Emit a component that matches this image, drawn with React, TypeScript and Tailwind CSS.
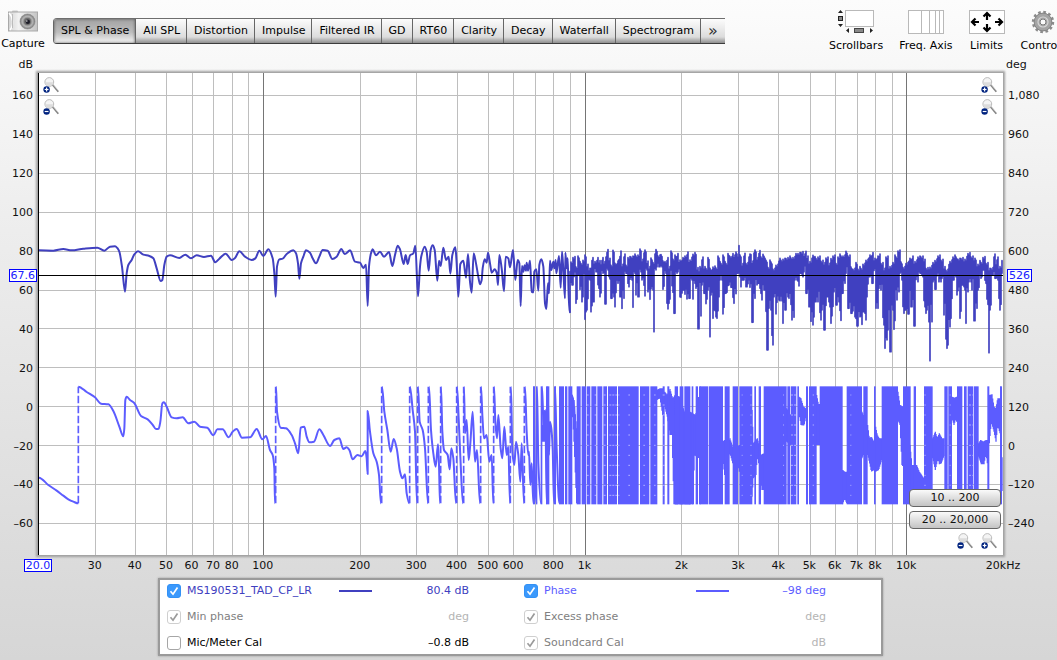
import { useState } from "react";
import type { ReactNode } from "react";
import clsx from "clsx";

// Chart units: three per pixel at the default window width.
const CHART_W = 2892;
const CHART_H = 1446;
const DECADE = 965;

const freqToX = (f: number) => 673.5 + DECADE * (Math.log10(f) - 2);

type Pt = [number, number];

function parse(s: string, dx: number, dy: number): Pt[] {
  return s.trim().split(/\s+/).map((p) => {
    const [x, y] = p.split(",").map(Number);
    return [x + dx, y + dy] as Pt;
  });
}

// Smooth curve that keeps every peak and dip where it was measured
function curve(pts: Pt[]) {
  const slope = (a: Pt, b: Pt) => (b[0] === a[0] ? 0 : (b[1] - a[1]) / (b[0] - a[0]));
  const tangents = pts.map((p, i) => {
    if (i === 0 || i === pts.length - 1) return 0;
    const l = slope(pts[i - 1], p);
    const r = slope(p, pts[i + 1]);
    return l * r <= 0 ? 0 : (2 * l * r) / (l + r);
  });
  let d = `M${pts[0][0]} ${pts[0][1]}`;
  for (let i = 1; i < pts.length; i++) {
    const [x0, y0] = pts[i - 1];
    const [x1, y1] = pts[i];
    const h = (x1 - x0) / 3;
    d += `C${x0 + h} ${y0 + h * tangents[i - 1]} ${x1 - h} ${y1 - h * tangents[i]} ${x1} ${y1}`;
  }
  return d;
}

function at(pts: Pt[], x: number) {
  let i = 1;
  while (i < pts.length - 1 && pts[i][0] < x) i++;
  const [x0, y0] = pts[i - 1];
  const [x1, y1] = pts[i];
  const t = Math.min(1, Math.max(0, (x - x0) / (x1 - x0 || 1)));
  return y0 + (y1 - y0) * t;
}

function nearest(pts: Pt[], x: number) {
  let best = pts[0];
  for (const p of pts) if (Math.abs(p[0] - x) < Math.abs(best[0] - x)) best = p;
  return best[1];
}

// Vertical hatching between two outlines
function hatch(top: Pt[], bottom: Pt[], step: number) {
  const end = top[top.length - 1][0];
  let d = "";
  for (let x = top[0][0]; x <= end; x += step) {
    d += `M${x} ${at(top, x)}V${at(bottom, x)}`;
  }
  return d;
}

// Same, but with ragged ends, as closely packed peaks and dips have
function bars(top: Pt[], bottom: Pt[], step: number) {
  const end = top[top.length - 1][0];
  let d = "";
  let n = 0;
  for (let x = top[0][0]; x <= end; x += step) {
    const t = nearest(top, x) + ((n * 7) % 5) * 3;
    let b = nearest(bottom, x);
    if (n % 3 === 1) b -= (b - t) * 0.12;
    if (n % 7 === 4) b -= (b - t) * 0.25;
    d += `M${x} ${t}V${b}`;
    n++;
  }
  return d;
}

const LOW = -117;
const MID = 933;
const HIGH = 1983;
const SPL_Y = 471;
const PH_Y = 906;

const SPL_LINE: Pt[] = [
  ...parse(
    `117,61 160,62 190,57 215,61 250,56 292,53 313,62 330,50 345,49 352,54 358,65 366,110 375,185 380,130 385,105 395,90 403,73 414,64
     430,74 448,78 460,85 470,115 482,153 487,150 493,105 500,80 510,76 538,84 556,74 573,85 590,76 612,81 633,77 646,97 658,86 677,71
     695,90 705,84 718,64 735,80 755,90 766,85 778,62 790,78 805,58 818,85 823,130 827,200 831,110 838,88 848,86 860,72 880,61 888,70
     894,100 898,146 903,100 910,80 918,61 930,68 938,85 948,100 958,80 968,60 983,62 997,87 1010,80 1024,57 1034,72 1048,62`,
    LOW, SPL_Y),
  ...parse(
    `0,61 15,95 30,98 40,114 48,104 53,228 57,110 63,70 68,58 78,76 90,65 102,80 117,66 127,108 135,75 143,47 150,58 161,102 167,75
     173,102 180,76 190,70 196,47 204,199 210,110 214,78 224,50 230,65 236,122 242,60 248,46 254,60 262,152 267,92 272,108 280,53
     288,90 296,80 301,131 307,75 316,52 320,100 325,200 331,102 340,92 348,143 354,72 360,155 365,188 371,70 378,100 384,135 390,163
     395,150 398,115 404,88 410,98 414,68 420,100 425,128 434,118 440,128 444,165 448,75 455,115 462,184 467,80 475,85 480,112
     489,60 496,150 503,90 508,100 512,228 516,108 520,125 524,106 528,122 530,98 534,122 540,92 545,185 550,187 553,125 559,118
     565,182 568,105 574,88 580,110 585,220 589,237 594,160 597,190 600,92 604,120 610,95 613,115 617,90 619,130 627,78 632,173
     636,65 640,120 645,205 646,68 650,115 653,85 656,195 659,247`,
    MID, SPL_Y),
];

const SPL_TOP: Pt[] = [
  ...parse(
    `660,125 665,90 672,80 678,105 685,75 692,95 700,88 706,75 710,100 718,115 722,110 728,80 735,95 741,80 748,92 752,100 756,80
     764,95 769,75 772,56 777,85 784,100 790,58 796,100 803,90 810,80 812,57 818,100 824,72 830,100 836,80 846,75 855,72 866,72
     872,57 877,85 885,60 892,90 897,110 904,78 910,95 915,72 920,53 926,75 936,68 940,90 948,95 953,80 960,110 965,57 970,85
     977,75 983,68 990,90 997,80 1003,78 1013,63 1020,90 1030,70 1038,68 1043,110 1049,118`,
    MID, SPL_Y),
  ...parse(
    `0,110 6,78 12,110 20,110 27,80 30,115 40,108 50,108 57,75 62,95 70,72 78,95 84,68 92,80 98,68 104,75 108,60 114,80 117,38
     122,75 128,98 134,70 140,95 148,72 153,68 158,90 165,60 172,80 178,62 184,75 190,70 198,85 204,110 215,90 222,115 232,100
     238,85 250,85 262,80 272,78 282,80 288,65 298,68 306,62 312,72 318,58 322,75 330,95 338,73 348,80 356,78 365,88 375,98 380,78
     388,100 395,80 402,75 408,95 414,78 425,72 432,75 438,58 448,75 455,105 462,115 468,92 475,115 483,110 492,100 500,85 508,75
     518,65 524,85 532,75 540,72 545,95 553,115 562,75 570,110 580,95 588,75 598,60 604,90 612,110 622,95 630,85 638,75 645,95
     655,78 665,75 675,88 680,110 690,112 698,95 706,92 715,75 725,85 733,110 740,115 752,95 758,78 768,75 778,85 785,80 795,88
     805,68 815,75 825,85 832,100 842,92 850,80 860,95 868,115 876,110 882,72 888,100 893,78 900,110 907,80`,
    HIGH, SPL_Y),
];

const SPL_BOTTOM: Pt[] = [
  ...parse(
    `660,247 663,165 670,165 675,125 679,220 685,135 692,190 698,215 702,130 706,268 712,240 716,150 724,245 731,215 737,125 745,175
     752,200 757,130 768,222 773,120 778,155 786,205 792,200 796,230 801,150 806,160 812,200 816,252 821,205 828,130 838,170 843,150
     849,232 854,130 860,195 866,200 871,125 876,150 883,198 889,120 896,185 903,208 908,180 911,305 915,120 925,110 935,110 941,178
     947,130 951,237 957,220 963,120 968,200 974,250 978,130 985,125 989,200 995,202 1001,180 1006,208 1013,207 1020,205 1025,150
     1028,252 1033,160 1040,175 1047,296 1049,170`,
    MID, SPL_Y),
  ...parse(
    `0,180 3,258 8,165 13,190 20,235 25,180 29,320 34,195 38,265 42,280 47,260 53,265 56,200 62,150 71,252 76,190 82,198 88,165
     94,172 100,220 108,208 112,130 118,140 124,170 132,150 140,170 150,172 156,277 162,205 168,175 175,160 180,190 187,210 193,180
     197,265 203,360 207,250 213,240 218,345 222,200 228,252 235,210 242,212 250,280 256,240 262,200 268,205 275,270 281,262 287,150
     295,180 300,130 306,140 314,125 320,190 328,230 335,297 341,285 348,215 355,215 361,270 367,240 376,300 381,200 388,230 396,280
     403,185 410,225 416,215 420,298 427,190 433,160 440,130 447,235 454,250 463,260 471,288 478,260 485,305 490,245 495,270 502,200
     510,140 516,160 522,125 530,235 538,175 545,180 550,285 556,355 561,330 565,300 570,365 576,240 582,298 588,210 594,185 600,130
     606,150 610,268 617,240 624,252 632,230 640,225 643,288 650,155 660,130 668,140 675,250 682,240 686,275 690,392 694,275 700,155
     706,178 712,145 720,155 728,145 735,255 739,355 743,345 748,290 755,265 758,150 766,140 773,195 782,265 786,165 794,180 798,342
     802,185 810,155 818,180 823,272 829,235 836,180 842,145 850,120 858,160 862,240 866,368 870,240 876,135 884,145 892,150 896,205
     903,258 908,130`,
    HIGH, SPL_Y),
];

// One entry per stretch between phase wraps
const PHASE_LINES: Pt[][] = [
  parse("117,308 145,330 170,347 190,362 205,373 220,380 235,385", LOW, PH_Y),
  parse(
    `235,35 260,51 285,67 303,86 325,88 340,108 358,155 370,184 373,160 376,75 380,65 390,75 402,83 423,123 443,133 457,148 468,162
     476,161 481,140 487,85 492,82 500,95 515,127 530,130 548,127 565,145 583,140 600,155 622,158 640,181 652,163 668,163 686,187
     698,170 710,162 726,188 750,187 770,162 787,193 798,183 810,225 818,240 823,280 825,385`,
    LOW, PH_Y),
  [
    ...parse(
      `828,35 831,110 842,158 858,160 875,180 885,205 895,235 902,158 913,155 920,185 928,202 942,200 958,163 970,180 990,213 1003,195
       1018,190 1030,222 1040,217 1048,225`,
      LOW, PH_Y),
    ...parse("0,230 8,253 22,240 35,244 46,228 50,250 53,297 53,108 60,170 70,235 80,260 87,300 93,385", MID, PH_Y),
  ],
  ...[
    "96,35 103,110 112,165 122,230 131,192 140,220 150,290 157,310 165,298 170,355 178,385",
    "180,35 188,105 195,170 201,385",
    "204,35 209,140 218,165 225,220 234,385",
    "237,35 243,165 250,235 257,275 264,208 267,270 270,385",
    "273,35 277,170 282,225 293,240 299,283 304,220 310,250 318,385",
    "321,35 326,130 331,245 339,385",
    "342,35 345,175 350,135 356,255 361,205 368,110 375,260 381,225 390,385",
    "393,35 397,120 402,190 410,180 418,260 425,240 430,385",
    "432,35 436,140 441,190 445,120 452,220 457,250 463,155 470,240 475,215 480,385",
    "483,35 487,230 493,270 498,200 505,240 511,320 515,205 522,385",
    "525,35 530,170 535,240 537,230 541,330 545,265 550,385",
    "552,35 554,270 559,385",
    "561,35 565,265 573,385",
    "576,35 580,140 584,195 586,105 590,385",
    "593,35 597,240 600,140 604,160 608,220 612,385",
    "615,35 620,220 628,385",
    "665,60 670,80 675,150 679,230 682,385",
  ].map((s) => parse(s, MID, PH_Y)),
];

// Where the phase passes -180 and starts again at +180
const WRAPS = [118, 710, 1028, 1112, 1136, 1168, 1205, 1253, 1274, 1325, 1364, 1414, 1456];

// Runs so dense that they read as solid bars
const PHASE_SOLID: Pt[] = [
  ...(
    [
      [549, 555], [558, 562], [572, 577], [588, 598], [612, 618], [627, 642], [645, 652], [655, 667], [680, 692], [695, 708],
      [710, 721], [724, 739], [742, 757], [760, 771], [774, 801], [804, 866], [870, 898], [901, 922], [938, 944], [952, 958],
      [974, 984], [989, 1000], [1003, 1021], [1025, 1030], [1037, 1044], [1047, 1052],
    ] as Pt[]
  ).map(([a, b]) => [a + MID, b + MID] as Pt),
  ...(
    [
      [0, 24], [26, 69], [74, 89], [98, 114], [118, 157], [163, 168], [176, 183], [191, 260], [262, 270], [272, 289], [292, 297],
      [318, 324], [327, 350], [359, 428], [440, 486], [490, 503], [522, 527], [545, 594], [609, 632], [641, 648], [672, 698],
      [733, 743], [745, 756], [771, 787], [792, 800], [803, 820], [822, 836], [862, 868], [900, 906],
    ] as Pt[]
  ).map(([a, b]) => [a + HIGH, b + HIGH] as Pt),
];

// Areas that fill only part of the phase range: top outline, bottom outline
const PHASE_PARTIAL: [Pt[], Pt[]][] = (
  [
    ["578,150 582,105 588,110", "578,200 588,200", MID],
    ["666,60 672,75 680,160", "666,90 672,200 680,385", MID],
    ["920,45 930,40 938,40", "920,75 930,70 938,120", MID],
    ["944,50 952,60 960,42 968,70 976,60", "944,95 952,125 960,180 968,180 976,180", MID],
    ["966,180 976,170 1000,120 1030,120", "966,180 972,388 1030,388 1030,388", MID],
    ["976,60 990,65 1003,110 1020,120", "976,388 1020,388", MID],
    ["1020,110 1037,120 1047,60", "1020,388 1030,380 1033,240 1047,250", MID],
    ["68,200 74,195 80,210 90,190 98,215", "68,250 74,300 80,250 90,235 98,265", HIGH],
    ["112,215 118,210", "112,260 118,290", HIGH],
    ["156,105 160,205 168,195 172,190 176,205", "156,365 160,310 168,300 172,240 176,265", HIGH],
    ["182,240 191,235", "182,320 186,345 191,345", HIGH],
    ["260,100 272,120", "260,200 272,210", HIGH],
    ["297,65 303,70 310,95 318,100", "297,115 303,150 312,152 318,125", HIGH],
    ["350,60 356,90 359,85", "350,210 359,210", HIGH],
    ["428,285 434,290 440,290", "428,388 434,370 440,385", HIGH],
    ["486,110 490,120", "486,250 490,240", HIGH],
    ["503,150 508,190 514,185 522,200", "503,240 510,270 514,290 522,285", HIGH],
    ["527,155 532,180 538,190 545,190", "527,290 536,285 545,255", HIGH],
    ["594,50 600,90 609,95", "594,135 600,150 606,270 609,275", HIGH],
    ["630,210 636,270 650,270 658,290 672,310", "630,388 672,388", HIGH],
    ["698,190 706,170 712,190 718,175 726,190 733,190", "698,250 706,285 714,250 718,268 724,265 733,240", HIGH],
    ["756,65 764,68 771,65", "756,130 762,150 768,130 771,145", HIGH],
    ["836,205 842,195 850,200 858,195 862,195", "836,245 844,268 852,268 858,235 862,265", HIGH],
    ["868,60 876,58 882,95 888,100 893,70 900,70", "868,205 874,140 882,170 888,200 893,150 900,175", HIGH],
    ["902,35 907,300", "902,200 907,385", HIGH],
  ] as [string, string, number][]
).map(([t, b, dx]) => [parse(t, dx, PH_Y), parse(b, dx, PH_Y)]);

// Places where the dashes of neighbouring wraps leave light gaps
const FLECKS: [number, number][] = [
  [1643, 1651], [1667, 1672], [1694, 1700], [1711, 1741], [1768, 1773], [1813, 1818], [1845, 1850], [1871, 1877],
  [2108, 2111], [2134, 2138], [2232, 2235], [2256, 2271], [2321, 2325], [2434, 2437], [2656, 2660], [2732, 2735], [2790, 2801],
];
const FLECK_ROWS = [60, 90, 120, 150, 180, 211, 241, 271, 301, 331, 361];

const DB = ["160", "140", "120", "100", "80", "60", "40", "20", "0", "–20", "–40", "–60"];
const DEG = ["1,080", "960", "840", "720", "600", "480", "360", "240", "120", "0", "–120", "–240"];

const FREQS: [number, string][] = [
  [20, "20.0"], [30, "30"], [40, "40"], [50, "50"], [60, "60"], [70, "70"], [80, "80"], [100, "100"], [200, "200"], [300, "300"],
  [400, "400"], [500, "500"], [600, "600"], [800, "800"], [1000, "1k"], [2000, "2k"], [3000, "3k"], [4000, "4k"], [5000, "5k"],
  [6000, "6k"], [7000, "7k"], [8000, "8k"], [10000, "10k"], [20000, "20kHz"],
];

const GRID_FREQS = [10, 100, 1000, 10000].flatMap((d) => [1, 2, 3, 4, 5, 6, 7, 8, 9].map((n) => n * d))
  .filter((f) => f > 20 && f < 20000);

const TABS = ["SPL & Phase", "All SPL", "Distortion", "Impulse", "Filtered IR", "GD", "RT60", "Clarity", "Decay", "Waterfall", "Spectrogram"];

function Chart() {
  const spl = { fill: "none", stroke: "#4040c0", strokeLinejoin: "round", strokeLinecap: "round" } as const;
  return (
    <svg
      viewBox={`0 0 ${CHART_W} ${CHART_H}`}
      preserveAspectRatio="none"
      className="block h-full w-full"
      role="img"
      aria-label="SPL and phase against frequency"
    >
      <g shapeRendering="crispEdges" strokeWidth="3">
        {DB.map((v, i) => {
          const y = 67.5 + Math.round(i * 38.9) * 3;
          return <line key={v} x1="0" x2={CHART_W} y1={y} y2={y} stroke="#bebebe" />;
        })}
        {GRID_FREQS.map((f) => {
          const x = freqToX(f);
          const decade = Number.isInteger(Math.log10(f));
          return <line key={f} x1={x} x2={x} y1="0" y2={CHART_H} stroke={decade ? "#757575" : "#bebebe"} />;
        })}
      </g>

      <path d={curve(SPL_LINE)} {...spl} strokeWidth="6" />
      <path d={bars(SPL_TOP, SPL_BOTTOM, 3)} {...spl} strokeWidth="5" />

      <g stroke="#5c5cff" fill="none" strokeLinejoin="round">
        {WRAPS.map((x) => (
          <line key={x} x1={x} x2={x} y1={PH_Y + 385} y2={PH_Y + 35} strokeWidth="5" strokeDasharray="23 7" />
        ))}
        {PHASE_LINES.map((pts, i) => (
          <path key={i} d={curve(pts)} strokeWidth="6" />
        ))}
        {PHASE_PARTIAL.map(([top, bottom], i) => (
          <path key={i} d={hatch(top, bottom, 2)} strokeWidth="4" />
        ))}
      </g>
      <g fill="#5c5cff">
        {PHASE_SOLID.map(([a, b]) => (
          <rect key={a} x={a} y={PH_Y + 34} width={b - a} height="354" />
        ))}
      </g>
      <g stroke="#d6d6ff" strokeWidth="2">
        {FLECKS.map(([a, b]) =>
          FLECK_ROWS.map((y) => (
            <line key={`${a}-${y}`} x1={a} x2={b} y1={PH_Y + y} y2={PH_Y + y} strokeDasharray="6 3" />
          )),
        )}
      </g>

      <line x1="0" x2={CHART_W} y1="607.5" y2="607.5" stroke="#000" strokeWidth="3" shapeRendering="crispEdges" />
    </svg>
  );
}

function ZoomButton({ sign }: { sign: "in" | "out" }) {
  return (
    <button type="button" aria-label={sign === "in" ? "Zoom in" : "Zoom out"} className="block size-4">
      <svg viewBox="0 0 16 16" className="block size-4">
        <rect width="16" height="16" fill="#fff" />
        <path d="M9.500 7.800 15.300 14.800" stroke="#858585" strokeWidth="1.7" />
        <path d="M10.500 7.800 15.600 13.800" stroke="#d4d4d4" strokeWidth=".7" />
        <circle cx="6.300" cy="5" r="4.400" fill="#f4f4f4" stroke="#b4b4b4" strokeWidth=".9" />
        <path d="M2.600 5.200a3.700 3.700 0 0 0 7.400 0z" fill="#dcdcdc" />
        <circle cx="3.600" cy="12.500" r="3.200" fill="#00237f" />
        <path d="M1.700 12.500h3.800" stroke="#fff" strokeWidth="1.2" />
        {sign === "in" && <path d="M3.600 10.600v3.800" stroke="#fff" strokeWidth="1.2" />}
      </svg>
    </button>
  );
}

function CameraIcon() {
  return (
    <svg viewBox="0 0 30 22" className="h-[22px] w-[30px]">
      <defs>
        <linearGradient id="cam" x1="0" x2="1">
          <stop offset="0" stopColor="#d2d2d2" />
          <stop offset=".35" stopColor="#f2f2f2" />
          <stop offset="1" stopColor="#c4c4c4" />
        </linearGradient>
        <radialGradient id="lens">
          <stop offset="0" stopColor="#333" />
          <stop offset=".35" stopColor="#777" />
          <stop offset=".7" stopColor="#b5b5b5" />
          <stop offset="1" stopColor="#777" />
        </radialGradient>
      </defs>
      <rect x="4" y=".5" width="6" height="2" rx="1" fill="#c9c9c9" />
      <rect x=".5" y="2" width="29" height="19" fill="url(#cam)" stroke="#a9a9a9" />
      <path d="M1 3c4 4 5 12 1 17" fill="none" stroke="#fff" strokeWidth="1.5" />
      <path d="M4.500 4v14" stroke="#bbb" />
      <circle cx="19.500" cy="11.500" r="7.500" fill="url(#lens)" stroke="#8a8a8a" strokeWidth=".6" />
      <circle cx="19.500" cy="11.500" r="3.400" fill="#6d6d6d" />
      <circle cx="19.800" cy="11.800" r="2.200" fill="#1d1d28" />
      <circle cx="18.800" cy="11" r=".8" fill="#ddd" />
    </svg>
  );
}

function ScrollbarsIcon() {
  return (
    <svg viewBox="0 0 38 24" className="h-6 w-[38px]">
      <rect x="8.500" y=".5" width="28" height="16" fill="#fff" stroke="#b9b9b9" />
      <path d="M3.500 0 6 3H1zM3.500 17 1 14h5zM9 20.500l3-2.500v5zM36 20.500l-3-2.500v5z" fill="#222" />
      <rect x="1.500" y="6.500" width="4" height="4" fill="#888" stroke="#222" />
      <rect x="17.500" y="18.500" width="9" height="4" fill="#888" stroke="#444" />
    </svg>
  );
}

function FreqAxisIcon() {
  return (
    <svg viewBox="0 0 36 24" className="h-6 w-9">
      <rect x=".5" y=".5" width="35" height="23" fill="#fff" stroke="#b9b9b9" />
      <path d="M13.500 0v24M21.500 0v24M27.500 0v24M31.500 0v24" stroke="#b9b9b9" />
    </svg>
  );
}

function LimitsIcon() {
  return (
    <svg viewBox="0 0 36 24" className="h-6 w-9">
      <rect x=".5" y=".5" width="35" height="23" fill="#fff" stroke="#b9b9b9" />
      <g fill="none" stroke="#000" strokeWidth="2.200">
        <path d="M18 10V3M14.500 6.500 18 3l3.500 3.500M18 14v7M14.500 17.500 18 21l3.500-3.500" />
        <path d="M10 12H3M6.500 8.500 3 12l3.500 3.500M26 12h7M29.500 8.500 33 12l-3.500 3.500" />
      </g>
    </svg>
  );
}

function GearIcon() {
  return (
    <svg viewBox="0 0 24 24" className="size-6">
      <circle cx="12" cy="12" r="9.800" fill="none" stroke="#8b8b8b" strokeWidth="2.800" strokeDasharray="2.600 2.530" />
      <circle cx="12" cy="12" r="6.200" fill="none" stroke="#a4a4a4" strokeWidth="6" />
      <circle cx="12" cy="12" r="8.900" fill="none" stroke="#777" strokeWidth=".7" />
      <circle cx="12" cy="12" r="5" fill="none" stroke="#d5d5d5" strokeWidth="1.200" />
      <circle cx="12" cy="12" r="3" fill="#fafafa" stroke="#777" />
    </svg>
  );
}

function ToolButton({ icon, label }: { icon: ReactNode; label: string }) {
  return (
    <button type="button" className="flex shrink-0 flex-col items-center gap-[5px]">
      {icon}
      <span className="leading-[14px]">{label}</span>
    </button>
  );
}

function Header() {
  const [tab, setTab] = useState("SPL & Phase");
  return (
    <header className="flex h-[57px] items-start overflow-hidden pt-[10px] text-black">
      <button type="button" className="flex w-[46px] shrink-0 flex-col items-center gap-[5px]">
        <CameraIcon />
        <span className="leading-[14px]">Capture</span>
      </button>
      <nav className="mt-2 ml-[7px] flex h-[26px] shrink-0 overflow-hidden rounded-l-[4px] border-y border-l border-t-[#6e6e6e] border-b-[#3c3c3c] border-l-[#666]">
        {TABS.map((t) => (
          <button
            key={t}
            type="button"
            onClick={() => setTab(t)}
            className={clsx(
              "border-r border-[#666] pr-1.5 pl-[7px] whitespace-nowrap",
              t === tab
                ? "bg-linear-to-b from-[#a2a2a2] via-[#bdbdbd] via-55% to-[#f6f6f6] shadow-[inset_0_0_3px_#555]"
                : "bg-linear-to-b from-[#fcfcfc] via-[#dcdcdc] via-75% to-[#8f8f8f]",
            )}
          >
            {t}
          </button>
        ))}
        <button type="button" aria-label="More graphs" className="bg-linear-to-b from-[#fcfcfc] via-[#dcdcdc] via-75% to-[#8f8f8f] px-[7px] text-base leading-none text-[#333]">
          »
        </button>
      </nav>
      <div className="-mr-[9px] ml-auto flex shrink-0 gap-4">
        <ToolButton icon={<ScrollbarsIcon />} label="Scrollbars" />
        <ToolButton icon={<FreqAxisIcon />} label="Freq. Axis" />
        <ToolButton icon={<LimitsIcon />} label="Limits" />
        <ToolButton icon={<GearIcon />} label="Controls" />
      </div>
    </header>
  );
}

function FreqAxis() {
  return (
    <div className="mr-[54px] ml-[38px] flex h-[23px] pt-1 leading-[13px]">
      {FREQS.map(([f, label], i) => {
        const next = FREQS[i + 1];
        return (
          <div key={f} className="flex basis-0" style={{ flexGrow: next ? Math.log10(next[0] / f) : 0 }}>
            <div className="flex w-0 justify-center">
              <span className={clsx("h-[13px] whitespace-nowrap", i === 0 && "border border-[#0000ff] bg-white px-px leading-[11px] text-[#2020ff]")}>
                {label}
              </span>
            </div>
          </div>
        );
      })}
    </div>
  );
}

type Trace = {
  name: string;
  value: string;
  checked: boolean;
  state: "spl" | "phase" | "off" | "plain";
};

const TRACES: Trace[] = [
  { name: "MS190531_TAD_CP_LR", value: "80.4 dB", checked: true, state: "spl" },
  { name: "Phase", value: "–98 deg", checked: true, state: "phase" },
  { name: "Min phase", value: "deg", checked: true, state: "off" },
  { name: "Excess phase", value: "deg", checked: true, state: "off" },
  { name: "Mic/Meter Cal", value: "–0.8 dB", checked: false, state: "plain" },
  { name: "Soundcard Cal", value: "dB", checked: true, state: "off" },
];

const TRACE_TEXT = { spl: "text-[#4040c0]", phase: "text-[#5c5cff]", off: "text-[#808080]", plain: "text-black" };

function TraceRow({ trace }: { trace: Trace }) {
  const [on, setOn] = useState(trace.checked);
  const off = trace.state === "off";
  const drawn = trace.state === "spl" || trace.state === "phase";
  return (
    <div className={clsx("flex h-[22px] items-center", TRACE_TEXT[trace.state])}>
      <label className="flex w-[172px] items-center gap-[6px] whitespace-nowrap">
        <span className="relative block size-[14px]">
          <input
            type="checkbox"
            checked={on}
            disabled={off}
            onChange={(e) => setOn(e.target.checked)}
            className={clsx(
              "block size-[14px] appearance-none rounded-[3px] border",
              off ? "border-[#cfcfcf] bg-white" : "border-[#a6a6a6] bg-white checked:border-[#3391f5] checked:bg-[#3b99fc]",
            )}
          />
          {on && (
            <svg viewBox="0 0 14 14" className="pointer-events-none absolute inset-0 size-[14px]">
              <path d="M3.500 7.300 6 10.200 10.500 3.500" fill="none" stroke={off ? "#9a9a9a" : "#fff"} strokeWidth="1.700" />
            </svg>
          )}
        </span>
        {trace.name}
      </label>
      <span className={clsx("h-0.5 w-[33px]", trace.state === "spl" && "bg-[#4040c0]", trace.state === "phase" && "bg-[#5c5cff]", !drawn && "bg-transparent")} />
      <span className={clsx("flex-1 text-right", off && "text-[#b4b4b4]")}>{trace.value}</span>
    </div>
  );
}

function RangeButton({ children }: { children: ReactNode }) {
  return (
    <button type="button" className="h-[18px] w-[92px] rounded-[4px] border border-[#666] bg-linear-to-b from-[#fafafa] to-[#c4c4c4] leading-[16px]">
      {children}
    </button>
  );
}

export default function App() {
  return (
    <div className="min-h-screen overflow-hidden bg-linear-to-b from-[#fcfcfc] via-[#ededed] via-35% to-[#d6d6d6] font-['DejaVu_Sans',sans-serif] text-[11px] text-[#111]">
      <Header />
      <div className="flex h-4 justify-between leading-4">
        <span className="w-[33px] text-right">dB</span>
        <span className="w-[51px]">deg</span>
      </div>

      <main>
        <div className="flex h-[482px]">
          <div className="relative flex w-[38px] flex-col pt-1 pr-[5px] pb-[11px] text-right">
            {DB.map((v) => (
              <span key={v} className="flex flex-1 items-center justify-end">{v}</span>
            ))}
            <span className="absolute top-[196px] right-px z-10 h-[13px] border border-[#0000ff] bg-white px-px leading-[11px] text-[#2020ff]">67.6</span>
          </div>
          <div className="relative min-w-0 flex-1 border-l border-black bg-white shadow-[0_0_2px_2px_#a0a0a0]">
            <Chart />
            <div className="absolute top-1 left-1 flex flex-col gap-[6px]">
              <ZoomButton sign="in" />
              <ZoomButton sign="out" />
            </div>
            <div className="absolute top-1 right-[6px] flex flex-col gap-[6px]">
              <ZoomButton sign="in" />
              <ZoomButton sign="out" />
            </div>
            <div className="absolute right-[2px] bottom-[6px] flex flex-col items-end gap-1">
              <RangeButton>10 .. 200</RangeButton>
              <RangeButton>20 .. 20,000</RangeButton>
              <div className="flex gap-2 pr-1">
                <ZoomButton sign="out" />
                <ZoomButton sign="in" />
              </div>
            </div>
          </div>
          <div className="relative flex w-[54px] flex-col pt-1 pb-[11px] pl-[5px]">
            {DEG.map((v) => (
              <span key={v} className="flex flex-1 items-center">{v}</span>
            ))}
            <span className="absolute top-[196px] left-1 h-[13px] border border-[#0000ff] bg-white px-px leading-[11px] text-[#2020ff]">526</span>
          </div>
        </div>

        <FreqAxis />

        <section className="mr-[54px] ml-[38px]">
          <div className="mx-auto grid w-[725px] max-w-full grid-cols-2 gap-x-[55px] gap-y-1 border-2 border-[#9a9a9a] bg-white pr-[55px] pl-[7px] shadow-[0_0_2px_#999]">
            {TRACES.map((t) => (
              <TraceRow key={t.name} trace={t} />
            ))}
          </div>
        </section>
      </main>
    </div>
  );
}
